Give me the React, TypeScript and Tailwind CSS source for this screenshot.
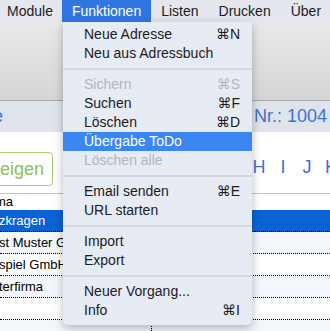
import React from "react";

type Item =
  | { type: "item"; label: string; shortcut?: string; disabled?: boolean; active?: boolean }
  | { type: "sep" };

const items: Item[] = [
  { type: "item", label: "Neue Adresse", shortcut: "⌘N" },
  { type: "item", label: "Neu aus Adressbuch" },
  { type: "sep" },
  { type: "item", label: "Sichern", shortcut: "⌘S", disabled: true },
  { type: "item", label: "Suchen", shortcut: "⌘F" },
  { type: "item", label: "Löschen", shortcut: "⌘D" },
  { type: "item", label: "Übergabe ToDo", active: true },
  { type: "item", label: "Löschen alle", disabled: true },
  { type: "sep" },
  { type: "item", label: "Email senden", shortcut: "⌘E" },
  { type: "item", label: "URL starten" },
  { type: "sep" },
  { type: "item", label: "Import" },
  { type: "item", label: "Export" },
  { type: "sep" },
  { type: "item", label: "Neuer Vorgang..." },
  { type: "item", label: "Info", shortcut: "⌘I" },
];

const rows = [
  { text: "zkragen", selected: true },
  { text: "st Muster GmbH", alt: true },
  { text: "spiel GmbH" },
  { text: "terfirma", alt: true },
  { text: "" },
  { text: "", alt: true },
];

export default function App() {
  return (
    <div className="relative w-[330px] h-[331px] overflow-hidden bg-white font-['Liberation_Sans',Arial,'DejaVu_Sans',sans-serif]">
      {/* menubar */}
      <div className="h-[22px] flex items-stretch bg-[#e4e7ee] text-[14px] text-[#1c1c1c] ml-[-2px]">
        <div className="px-[9px] flex items-center">Module</div>
        <div className="px-[10px] flex items-center bg-[#2f76e3] text-white">Funktionen</div>
        <div className="px-[10px] flex items-center">Listen</div>
        <div className="px-[10px] flex items-center">Drucken</div>
        <div className="px-[10px] flex items-center">Über</div>
      </div>

      {/* toolbar */}
      <div className="h-[79px] border-b border-[#a8a8a8] bg-gradient-to-b from-[#e9e9e9] to-[#d5d5d5]" />

      {/* info band */}
      <div className="h-[31px] bg-[#dfe4ec] flex items-center justify-between text-[18px] text-[#3e72d2]">
        <span className="ml-[-7px]">e</span>
        <span className="mr-[3px]">Nr.: 1004</span>
      </div>

      {/* white area */}
      <div className="h-[61px] flex justify-between">
        <div className="pt-[20px] ml-[-12px]">
          <div className="h-[34px] border border-[#a6d46c] rounded-[4px] pl-[11px] pr-[8px] flex items-center text-[18px] text-[#8cc152]">
            eigen
          </div>
        </div>
        <div className="flex items-center pt-[10px] text-[18px] text-[#3e72d2] mr-[-13px]">
          <span className="w-[24px] text-center">H</span>
          <span className="w-[24px] text-center">I</span>
          <span className="w-[24px] text-center">J</span>
          <span className="w-[24px] text-center">K</span>
        </div>
      </div>

      {/* table */}
      <div className="border-t border-[#c4c4c4] text-[13px] text-black">
        <div className="h-[16px] flex items-center">
          <span className="ml-[-5px]">ma</span>
        </div>
        {rows.map((r, i) => (
          <div
            key={i}
            className={
              "h-[22px] flex items-center border-b border-dotted border-black " +
              (r.selected ? "bg-[#0a63d4] text-white" : r.alt ? "bg-[#f3f6fb]" : "bg-white")
            }
          >
            <div className="w-[152px] h-full flex items-center border-r border-dotted border-black whitespace-nowrap overflow-hidden">
              <span className="ml-[-1px]">{r.text}</span>
            </div>
          </div>
        ))}
      </div>

      {/* dropdown menu */}
      <div className="absolute left-[63px] top-[22px] w-[189px] pt-[3px] pb-[5px] bg-[#e6ebf4] rounded-b-[5px] shadow-[0_3px_10px_rgba(0,0,0,0.28)] text-[14px]">
        {items.map((it, i) =>
          it.type === "sep" ? (
            <div key={i} className="h-[12px] flex items-center">
              <div className="h-[2px] w-full bg-[#d3d8e0]" />
            </div>
          ) : (
            <div
              key={i}
              className={
                "h-[19px] flex items-center justify-between pl-[21px] pr-[12px] " +
                (it.active
                  ? "bg-[#3a86f2] text-white"
                  : it.disabled
                  ? "text-[#b2b6bd]"
                  : "text-[#1c1c1c]")
              }
            >
              <span>{it.label}</span>
              {it.shortcut && <span>{it.shortcut}</span>}
            </div>
          )
        )}
      </div>
    </div>
  );
}
